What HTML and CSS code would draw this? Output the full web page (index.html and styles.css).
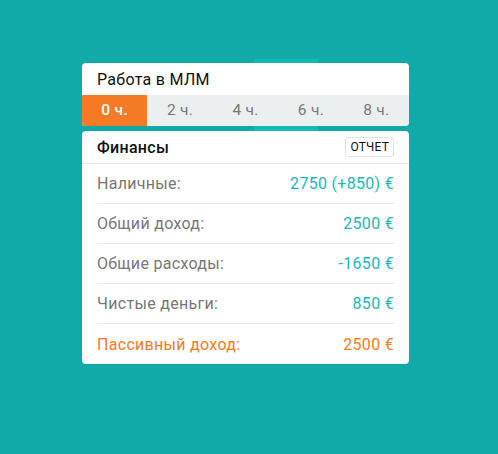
FILE: index.html
```html
<!DOCTYPE html>
<html lang="ru">
<head>
    <meta charset="UTF-8">
    <title>Работа в МЛМ</title>
    <link rel="stylesheet" href="styles.css">
</head>
<body>
    <div class="stage">
        <div class="glow glow-top"></div>
        <div class="glow glow-bottom"></div>

        <div class="card">
            <div class="card-title">Работа в МЛМ</div>
            <div class="tabs">
                <div class="tab active">0 ч.</div>
                <div class="tab">2 ч.</div>
                <div class="tab">4 ч.</div>
                <div class="tab">6 ч.</div>
                <div class="tab">8 ч.</div>
            </div>
        </div>

        <div class="card finance">
            <div class="finance-head">
                <span class="finance-title">Финансы</span>
                <button class="report-button">ОТЧЕТ</button>
            </div>
            <ul class="rows">
                <li><span>Наличные:</span><span class="value">2750 (+850) €</span></li>
                <li><span>Общий доход:</span><span class="value">2500 €</span></li>
                <li><span>Общие расходы:</span><span class="value">-1650 €</span></li>
                <li><span>Чистые деньги:</span><span class="value">850 €</span></li>
                <li class="passive"><span>Пассивный доход:</span><span class="value">2500 €</span></li>
            </ul>
        </div>
    </div>
</body>
</html>
```

FILE: styles.css
```css
body {
    margin: 0;
    background-color: #12aaa8;
    font-family: Roboto, "Noto Sans", sans-serif;
    letter-spacing: 0.3px;
}
.stage {
    position: relative;
    width: 327px;
    padding-top: 63px;
    margin-left: 82px;
}
.glow {
    position: absolute;
    background-color: #15bab7;
    width: 64px;
}
.glow-top {
    left: 172px;
    top: 59px;
    height: 80px;
}
.glow-bottom {
    left: 108px;
    top: 340px;
    height: 27px;
}
.card {
    position: relative;
    background-color: #fff;
    border-radius: 4px;
    overflow: hidden;
}
.card-title {
    height: 32px;
    line-height: 33px;
    padding-left: 15px;
    font-size: 16px;
    color: #111;
}
.tabs {
    display: flex;
    background-color: #eceff0;
    height: 31px;
}
.tab {
    flex: 1;
    text-align: center;
    line-height: 31px;
    font-size: 15.5px;
    color: #777;
}
.tab.active {
    background-color: #f47a25;
    color: #fff;
    font-weight: 500;
}
.finance {
    margin-top: 5px;
}
.finance-head {
    display: flex;
    justify-content: space-between;
    align-items: center;
    height: 32px;
    padding: 0 15px;
    border-bottom: 1px solid #e4e9ea;
}
.finance-title {
    font-size: 16px;
    font-weight: 500;
    color: #111;
}
.report-button {
    font-family: inherit;
    font-size: 12px;
    color: #111;
    background-color: #fff;
    border: 1px solid #dde3e4;
    border-radius: 3px;
    padding: 2px 4px;
    line-height: 14px;
    letter-spacing: 0.2px;
}
.rows {
    list-style-type: none;
    margin: 0;
    padding: 0 15px;
}
.rows li {
    display: flex;
    justify-content: space-between;
    align-items: center;
    height: 39px;
    border-bottom: 1px solid #e4e9ea;
    font-size: 16px;
    color: #777;
}
.rows li:last-child {
    border-bottom: none;
    height: 40px;
}
.value {
    color: #1ab8b4;
}
.rows li.passive,
.rows li.passive .value {
    color: #f47a25;
}
```
